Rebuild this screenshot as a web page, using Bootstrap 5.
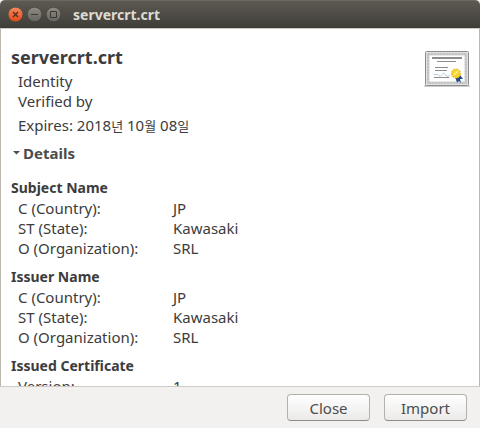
<!DOCTYPE html>
<html lang="en">
<head>
<meta charset="utf-8">
<meta name="viewport" content="width=device-width, initial-scale=1">
<title>servercrt.crt</title>
<link href="https://cdn.jsdelivr.net/npm/bootstrap@5.3.0/dist/css/bootstrap.min.css" rel="stylesheet">
<style>
body { font-family: "Noto Sans", "Noto Sans CJK KR", sans-serif; font-size: 15px; line-height: 20px; color: #3c3c3c; background: #f2f1f0; }
.titlebar { height: 28px; padding: 0 8px; gap: 4px; background: linear-gradient(#5d5a52, #3e3d38); border-top: 1px solid #6b6860; border-radius: 5px 5px 0 0; color: #dfdbd2; }
.titlebar h1 { font-size: 14px; line-height: 20px; font-weight: 700; margin: 0 0 0 8px; }
.win-btn { width: 15px; height: 15px; border: 0; padding: 0; background: none; }
.win-btn svg { display: block; }
.viewer { min-height: 0; background: #fff; border: 1px solid #bdb7b0; border-top-color: #cfc9c3; border-bottom-color: #cfcac5; padding: 16px 9px 0 10px; }
.viewer h2 { font-size: 18px; line-height: 24px; font-weight: 700; margin: 0 0 2px; }
.viewer h3 { font-size: 14px; line-height: 20px; font-weight: 700; margin: 0; }
.indent { padding-left: 7px; }
.expires { margin-top: 4px; height: 20px; }
.hangul { font-size: 13px; }
.toggle { font-size: 15px; line-height: 20px; font-weight: 700; color: #4c4c4c; margin: 8px 0 15px; padding: 0 2px; gap: 3px; }
.fields { margin-bottom: 9px; border-collapse: collapse; }
.fields th { width: 162px; font-weight: 400; padding: 0 0 0 7px; }
.fields td { padding: 0; }
.cert { margin-top: 4px; }
.actions { padding: 7px 13px 7px; gap: 14px; }
.gtk-btn { --bs-btn-color: #4c4c4c; --bs-btn-hover-color: #4c4c4c; width: 83px; height: 27px; padding: 0; font-size: 15px; line-height: 24px; border: 1px solid #b4b0ab; border-bottom-color: #8f8b87; border-radius: 4px; background: linear-gradient(#fff, #ebeae9); }
</style>
<script src="https://cdn.jsdelivr.net/npm/bootstrap@5.3.0/dist/js/bootstrap.bundle.min.js" defer></script>
</head>
<body class="d-flex flex-column vh-100 overflow-hidden">
<svg width="0" height="0" class="position-absolute" aria-hidden="true">
  <defs>
    <linearGradient id="orange" x2="0" y2="1"><stop stop-color="#f58a63"/><stop offset="1" stop-color="#df4a16"/></linearGradient>
    <linearGradient id="grey" x2="0" y2="1"><stop stop-color="#8f8c83"/><stop offset="1" stop-color="#66645d"/></linearGradient>
  </defs>
</svg>
<header class="titlebar d-flex align-items-center flex-shrink-0">
  <button class="win-btn" type="button" aria-label="Close window"><svg width="15" height="15"><circle cx="7.5" cy="7.5" r="7.300" fill="url(#orange)" stroke="#4a4740" stroke-width=".6"/><path d="M5 5l5 5M10 5l-5 5" stroke="#572817" stroke-width="1.2"/></svg></button>
  <button class="win-btn" type="button" aria-label="Minimize"><svg width="15" height="15"><circle cx="7.5" cy="7.5" r="7.300" fill="url(#grey)" stroke="#3a3934" stroke-width=".6"/><path d="M4 7.5h7" stroke="#3a3934"/></svg></button>
  <button class="win-btn" type="button" aria-label="Maximize"><svg width="15" height="15"><circle cx="7.5" cy="7.5" r="7.300" fill="url(#grey)" stroke="#3a3934" stroke-width=".6"/><path d="M4.500 4.500h6v6h-6z" fill="none" stroke="#3a3934"/></svg></button>
  <h1>servercrt.crt</h1>
</header>
<main class="viewer flex-grow-1 overflow-hidden">
  <div class="d-flex justify-content-between align-items-start">
    <div>
      <h2>servercrt.crt</h2>
      <div class="indent">
        <div>Identity</div>
        <div>Verified by</div>
        <div class="expires">Expires: 2018<span class="hangul">년</span> 10<span class="hangul">월</span> 08<span class="hangul">일</span></div>
      </div>
    </div>
    <svg class="cert" width="46" height="40" role="img" aria-label="Certificate">
      <rect x="0" y="36" width="46" height="2" rx="1" fill="#000" opacity=".2"/>
      <rect x="1.500" y="2.500" width="43" height="34" rx="1" fill="#f4f4f4" stroke="#8b8b8b"/>
      <rect x="4" y="5" width="38" height="29" fill="#fff" stroke="#cfd1cf" stroke-width="3"/>
      <rect x="4" y="5" width="38" height="29" fill="none" stroke="#b4b7b4" stroke-dasharray="2 1"/>
      <path d="M8 9h30" stroke="#8c8c8c" stroke-width="2"/>
      <path d="M13 12.500h19M11 18.500h13M11 21.500h12M10 28.500h15" stroke="#8c8c8c"/>
      <path d="M9 24.500q1 2 3 1t3 1t3-1t3 0t5 1" fill="none" stroke="#a9bbd3" stroke-width=".8"/>
      <path d="M31 28l2 5.500l2-1.500l2 2l-1-4l3 0l-3-4z" fill="#204a87"/>
      <circle cx="32" cy="24.500" r="4.500" fill="#f5d52d" stroke="#e8b91c" stroke-dasharray="2 1"/>
      <path d="M30 26l4-4" stroke="#fff09a" stroke-width="1.500"/>
    </svg>
  </div>
  <button class="toggle btn border-0 d-flex align-items-center" type="button" aria-expanded="true"><svg width="7" height="6"><path d="M0 1h7L3.500 4.500z" fill="#4c4c4c"/></svg>Details</button>
  <h3 id="subject">Subject Name</h3>
  <table class="fields" aria-labelledby="subject">
    <tr><th scope="row">C (Country):</th><td>JP</td></tr>
    <tr><th scope="row">ST (State):</th><td>Kawasaki</td></tr>
    <tr><th scope="row">O (Organization):</th><td>SRL</td></tr>
  </table>
  <h3 id="issuer">Issuer Name</h3>
  <table class="fields" aria-labelledby="issuer">
    <tr><th scope="row">C (Country):</th><td>JP</td></tr>
    <tr><th scope="row">ST (State):</th><td>Kawasaki</td></tr>
    <tr><th scope="row">O (Organization):</th><td>SRL</td></tr>
  </table>
  <h3 id="issued">Issued Certificate</h3>
  <table class="fields" aria-labelledby="issued">
    <tr><th scope="row">Version:</th><td>1</td></tr>
  </table>
</main>
<footer class="actions d-flex justify-content-end flex-shrink-0">
  <button class="btn gtk-btn" type="button">Close</button>
  <button class="btn gtk-btn" type="button">Import</button>
</footer>
</body>
</html>
